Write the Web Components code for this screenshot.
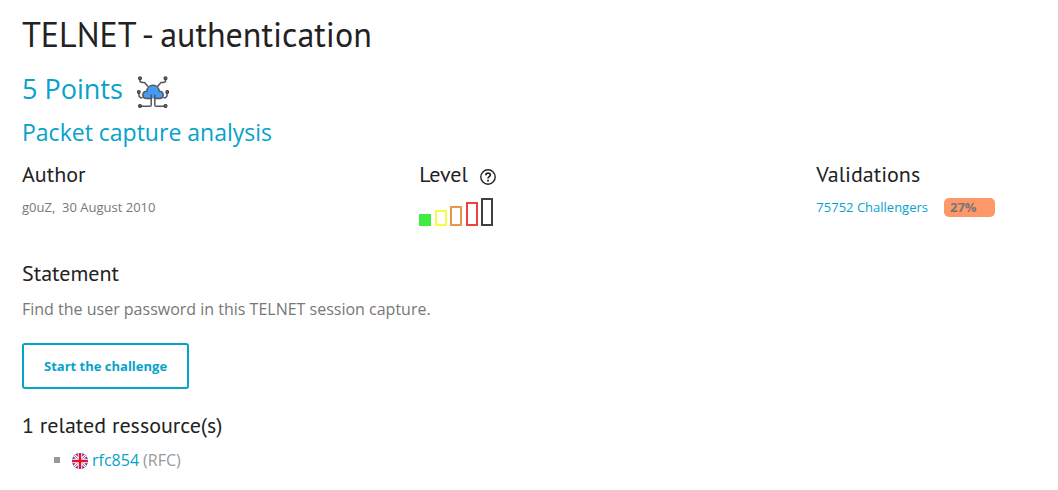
<!DOCTYPE html>
<html lang="en">
<head>
<meta charset="utf-8">
<meta name="viewport" content="width=device-width, initial-scale=1">
<title>TELNET - authentication</title>
<style>
body { margin: 0; background: #fff; color: #777; font: 16px/24px "Open Sans", sans-serif; }
</style>
</head>
<body>
<challenge-page></challenge-page>
<script>
const define = (name, html) => customElements.define(name, class extends HTMLElement {
  constructor() {
    super();
    const template = document.createElement('template');
    template.innerHTML = html;
    this.attachShadow({ mode: 'open' }).append(template.content.cloneNode(true));
  }
});

define('section-title', `
<style>
:host { display: block; }
h2 { margin: 0; display: flex; align-items: center; gap: 12px; color: #222; font: 400 22px/32px "PT Sans", Lato, sans-serif; }
</style>
<h2><slot></slot></h2>`);

define('network-icon', `
<style>:host { display: block; } svg { display: block; }</style>
<svg width="32" height="32" viewBox="0 0 32 32" fill="none" stroke="#55565f" stroke-width="1.5" stroke-linejoin="round" aria-hidden="true">
  <path d="M3 3v2.500L5 6.500h2.500L11 10.500M28.500 3v2.500L26.500 6.500h-2.500L20.500 10.500M2 17v3l1.500 1.700h2M30 17v3l-1.500 1.700h-2"/>
  <path d="M9 22.600a3.700 3.700 0 0 1-3.200-3.800c0-2.300 1.800-3.800 4-3.500C10 11.800 12.500 9.300 16 9.300s6 2.500 6.200 6c2.200-.3 4 1.200 4 3.500A3.700 3.700 0 0 1 23 22.600z" fill="#459cf3"/>
  <path d="M14.900 23.400h2.200" stroke="#fff" stroke-width="3"/>
  <path fill="#459cf3" stroke="none" d="M14.500 18h3v4.500h-3z"/>
  <path d="M14.200 18.500V29q0 1.300-1.300 1.300H3M17.800 18.500V29q0 1.300 1.300 1.300H29"/>
  <g fill="#8b8264" stroke="#403f43" stroke-width="1.300">
    <circle cx="3" cy="2.300" r="1.400"/><circle cx="28.500" cy="2.300" r="1.400"/>
    <circle cx="1.800" cy="16" r="1.300"/><circle cx="30.200" cy="16" r="1.300"/>
    <circle cx="3" cy="30" r="1.400"/><circle cx="28.500" cy="30" r="1.400"/>
  </g>
</svg>`);

define('help-icon', `
<style>:host { display: block; padding-top: 6px; } svg { display: block; }</style>
<svg width="16" height="16" viewBox="0 0 16 16" fill="none" stroke="#222" role="img" aria-label="Help">
  <circle cx="8" cy="8" r="7.200" stroke-width="1.400"/>
  <path d="M5.800 6.300c.1-3 4.500-2.900 4.500-.3 0 1.700-2.300 1.600-2.300 3.500" stroke-width="1.700"/>
  <path d="M8 10.800v1.800" stroke-width="1.800"/>
</svg>`);

define('level-meter', `
<style>
:host { display: flex; align-items: flex-end; justify-content: space-between; width: 74px; height: 28px; }
i { box-sizing: border-box; width: 12px; border: 2px solid; }
i:nth-of-type(1) { height: 12px; color: #3fec41; background: #3fec41; }
i:nth-of-type(2) { height: 16px; color: #f8fb45; }
i:nth-of-type(3) { height: 20px; color: #e8964a; }
i:nth-of-type(4) { height: 24px; color: #ef4040; }
i:nth-of-type(5) { height: 28px; color: #404040; }
</style>
<i></i><i></i><i></i><i></i><i></i>`);

define('percent-badge', `
<style>
:host { display: block; box-sizing: border-box; width: 51px; padding-left: 6px; border-radius: 5px; background: #ff9868; color: #777; font-size: 13px; line-height: 19px; font-weight: 700; }
</style>
<slot></slot>`);

define('action-button', `
<style>
:host { display: block; }
button { box-sizing: border-box; height: 46px; padding: 0 20px; border: 2px solid #06a2cb; border-radius: 3px; background: #fff; color: #06a2cb; font: 700 13px/18px "Open Sans", sans-serif; cursor: pointer; display: block; }
</style>
<button type="button"><slot></slot></button>`);

define('flag-icon', `
<style>:host { display: block; padding-top: 2px; } svg { display: block; }</style>
<svg width="16" height="16" viewBox="0 0 16 16" role="img" aria-label="English">
  <defs><clipPath id="disc"><circle cx="8" cy="8" r="8"/></clipPath></defs>
  <g clip-path="url(#disc)">
    <path fill="#3d3bb8" d="M0 0h16v16H0z"/>
    <path d="M0 0l16 16M16 0L0 16" stroke="#fff" stroke-width="2.800"/>
    <path d="M0 0l16 16M16 0L0 16" stroke="#f05060" stroke-width="1"/>
    <path d="M8 0v16M0 8h16" stroke="#fff" stroke-width="4.500"/>
    <path d="M8 0v16M0 8h16" stroke="#e8112d" stroke-width="2.500"/>
  </g>
</svg>`);

define('challenge-page', `
<style>
:host { display: block; padding: 11px 21px 12px 22px; }
h1 { margin: 0; color: #222; font: 400 34px/46px "PT Sans", Lato, sans-serif; }
a { color: #06a2cb; text-decoration: none; }
.points { margin-top: 12px; display: flex; align-items: center; gap: 14px; color: #06a2cb; font-size: 27px; line-height: 40px; }
.category { font-size: 23px; line-height: 32px; margin-top: 7px; }
network-icon { padding-top: 6px; }
.facts { display: grid; grid-template-columns: 9fr 9fr 5fr; margin-top: 10px; }
.detail { margin-top: 8px; font-size: 13px; line-height: 19px; }
.author { white-space: pre; }
.validations { display: flex; gap: 16px; }
level-meter { margin-top: 8px; }
.statement { margin-top: 31px; }
p { margin: 8px 0 0; }
action-button { margin-top: 22px; }
.related { margin-top: 20px; }
ul { list-style: none; margin: 8px 0 0; padding: 0 0 0 32px; line-height: 22px; }
li { display: flex; align-items: center; gap: 4px; color: #999; }
li::before { content: ""; width: 6px; height: 6px; background: #999; margin-right: 8px; }
</style>
<main>
  <h1>TELNET - authentication</h1>
  <div class="points"><span>5 Points</span><network-icon></network-icon></div>
  <div class="category"><a href="#category">Packet capture analysis</a></div>
  <div class="facts">
    <section><section-title>Author</section-title><div class="detail author">g0uZ,  30 August 2010</div></section>
    <section><section-title>Level<help-icon></help-icon></section-title><level-meter role="img" aria-label="Very easy"></level-meter></section>
    <section><section-title>Validations</section-title><div class="detail validations"><a href="#validations">75752 Challengers</a><percent-badge>27%</percent-badge></div></section>
  </div>
  <section class="statement"><section-title>Statement</section-title><p>Find the user password in this TELNET session capture.</p></section>
  <action-button>Start the challenge</action-button>
  <section class="related"><section-title>1 related ressource(s)</section-title>
    <ul><li><flag-icon></flag-icon><a href="#rfc854">rfc854</a><span>(RFC)</span></li></ul>
  </section>
</main>`);
</script>
</body>
</html></script>
